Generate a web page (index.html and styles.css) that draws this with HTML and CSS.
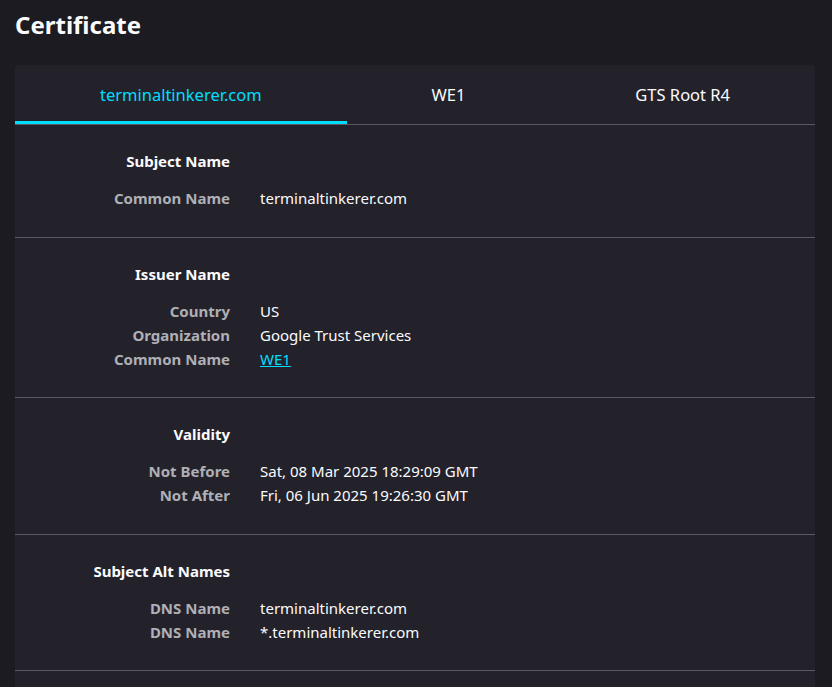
FILE: index.html
```html
<!DOCTYPE html>
<html lang="en">
<head>
<meta charset="utf-8">
<title>Certificate</title>
<link rel="stylesheet" href="styles.css">
</head>
<body>
<h1 class="title">Certificate</h1>
<div class="card">
  <div class="tabs">
    <div class="tab active">terminaltinkerer.com</div>
    <div class="tab">WE1</div>
    <div class="tab">GTS Root R4</div>
  </div>
  <section class="section tall">
    <div class="row head"><span class="label">Subject Name</span><span></span></div>
    <div class="rows">
      <div class="row"><span class="label">Common Name</span><span class="value">terminaltinkerer.com</span></div>
    </div>
  </section>
  <section class="section">
    <div class="row head"><span class="label">Issuer Name</span><span></span></div>
    <div class="rows">
      <div class="row"><span class="label">Country</span><span class="value">US</span></div>
      <div class="row"><span class="label">Organization</span><span class="value">Google Trust Services</span></div>
      <div class="row"><span class="label">Common Name</span><span class="value"><a class="link" href="#">WE1</a></span></div>
    </div>
  </section>
  <section class="section tall">
    <div class="row head"><span class="label">Validity</span><span></span></div>
    <div class="rows">
      <div class="row"><span class="label">Not Before</span><span class="value">Sat, 08 Mar 2025 18:29:09 GMT</span></div>
      <div class="row"><span class="label">Not After</span><span class="value">Fri, 06 Jun 2025 19:26:30 GMT</span></div>
    </div>
  </section>
  <section class="section">
    <div class="row head"><span class="label">Subject Alt Names</span><span></span></div>
    <div class="rows">
      <div class="row"><span class="label">DNS Name</span><span class="value">terminaltinkerer.com</span></div>
      <div class="row"><span class="label">DNS Name</span><span class="value">*.terminaltinkerer.com</span></div>
    </div>
  </section>
  <div class="rest"></div>
</div>
</body>
</html>
```
FILE: styles.css
```css
html, body {
  margin: 0;
  padding: 0;
  background: #1c1b22;
  color: #fbfbfe;
  font-family: "Noto Sans", "Open Sans", sans-serif;
  font-size: 15px;
  overflow: hidden;
}
body {
  padding: 0 17px 0 15px;
}
.title {
  margin: 0;
  padding-top: 9px;
  height: 65px;
  box-sizing: border-box;
  font-size: 24px;
  font-weight: 700;
  line-height: 32px;
  color: #fbfbfe;
}
.card {
  background: #23222b;
  border-radius: 4px 4px 0 0;
  width: 800px;
}
.tabs {
  display: flex;
  border-bottom: 1px solid #5b5a63;
}
.tab {
  flex: 1 1 auto;
  text-align: center;
  font-size: 16.5px;
  height: 59px;
  line-height: 59px;
  box-sizing: border-box;
  color: #fbfbfe;
  white-space: nowrap;
}
.tab.active {
  color: #00ddff;
  border-bottom: 3px solid #00ddff;
  margin-bottom: -1px;
}
.section {
  padding: 24px 0 26px;
  border-bottom: 1px solid #5b5a63;
}
.section.tall {
  padding-bottom: 27px;
}
.row {
  display: grid;
  grid-template-columns: 215px 1fr;
  column-gap: 30px;
  line-height: 24px;
}
.label {
  text-align: right;
  font-weight: 700;
  color: #afafb6;
}
.head .label {
  color: #fbfbfe;
}
.rows {
  margin-top: 13px;
}
.value {
  color: #fbfbfe;
}
.link {
  color: #00ddff;
  text-decoration: underline;
}
.rest {
  height: 40px;
}
```
